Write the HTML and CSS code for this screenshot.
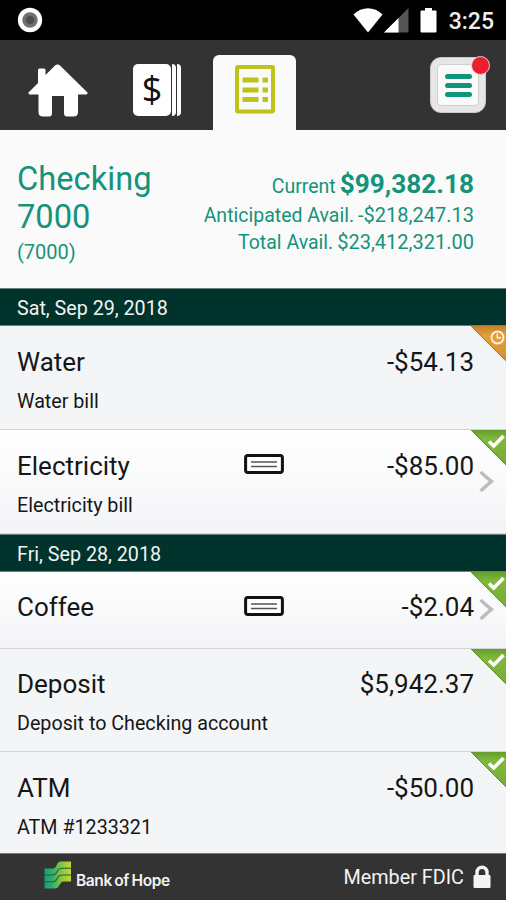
FILE: index.html
```html
<!DOCTYPE html>
<html lang="en">

<head>
    <meta charset="UTF-8">
    <title>Checking 7000</title>
    <link rel="stylesheet" href="styles.css">
</head>

<body>
    <!-- Shared icons -->
    <svg class="icon-defs" width="0" height="0">
        <defs>
            <linearGradient id="greenFill" x1="0" y1="0" x2="0" y2="1">
                <stop offset="0" stop-color="#659c2f" />
                <stop offset="0.25" stop-color="#7fb93a" />
                <stop offset="1" stop-color="#76ad35" />
            </linearGradient>
            <linearGradient id="orangeFill" x1="0" y1="0" x2="0" y2="1">
                <stop offset="0" stop-color="#c8812c" />
                <stop offset="0.3" stop-color="#e2a03c" />
                <stop offset="1" stop-color="#d68f30" />
            </linearGradient>
            <linearGradient id="hopeFill" gradientUnits="userSpaceOnUse" x1="0" y1="0" x2="27" y2="0">
                <stop offset="0" stop-color="#129e89" />
                <stop offset="0.3" stop-color="#2fae66" />
                <stop offset="0.6" stop-color="#7dc242" />
                <stop offset="1" stop-color="#c3d82e" />
            </linearGradient>
        </defs>
        <symbol id="cleared" viewBox="0 0 35 35">
            <path d="M0 0H35V35Z" fill="url(#greenFill)" />
            <path d="M0 0L35 35" stroke="#5d8f2c" stroke-width="1" />
            <path d="M18 11.5L22.7 16L32.5 6" fill="none" stroke="#fff" stroke-width="3.6" />
        </symbol>
        <symbol id="pending" viewBox="0 0 35 35">
            <path d="M0 0H35V35Z" fill="url(#orangeFill)" />
            <path d="M0 0L35 35" stroke="#b87828" stroke-width="1" />
            <circle cx="26.5" cy="11.5" r="6" fill="none" stroke="#fff3dd" stroke-width="1.8" />
            <path d="M26.3 7.5V11.8H30" fill="none" stroke="#fff3dd" stroke-width="1.5" />
        </symbol>
        <symbol id="check" viewBox="0 0 40 20">
            <rect x="1.6" y="1.6" width="36.8" height="16.8" rx="2.2" fill="#fff" stroke="#111" stroke-width="3" />
            <path d="M7 8H33M7 12.5H33" stroke="#555" stroke-width="1.7" />
        </symbol>
        <symbol id="arrow" viewBox="0 0 15 23">
            <path d="M1.5 2L12.3 11.5L1.5 21" fill="none" stroke="#bdbdbd" stroke-width="3.6" />
        </symbol>
    </svg>

    <div class="status-bar">
        <svg class="record" width="26" height="26" viewBox="0 0 26 26">
            <circle cx="13" cy="13" r="12.2" fill="#fff" />
            <circle cx="13" cy="13" r="7.7" fill="#707070" />
            <circle cx="13" cy="13" r="4" fill="#4e4e4e" />
        </svg>
        <div class="status-icons">
            <svg width="30" height="25" viewBox="0 0 30 25">
                <path d="M0.5 6.5C9 -1.7 21 -1.7 29.5 6.5L15 24.5Z" fill="#fff" />
            </svg>
            <svg class="signal" width="25" height="25" viewBox="0 0 25 25">
                <path d="M0 24.5L24.5 0V24.5Z" fill="#555" />
                <path d="M0 24.5L14.5 10V24.5Z" fill="#fff" />
            </svg>
            <svg class="battery" width="17" height="25" viewBox="0 0 17 25">
                <path d="M5 0H12V2.5H15.5Q16.5 2.5 16.5 3.5V23.5Q16.5 24.5 15.5 24.5H1.5Q0.5 24.5 0.5 23.5V3.5Q0.5 2.5 1.5 2.5H5Z" fill="#fff" />
            </svg>
            <span class="clock">3:25</span>
        </div>
    </div>

    <div class="tabs">
        <div class="tab">
            <svg width="60" height="54" viewBox="0 0 60 54">
                <path d="M29.5 0.5Q31 0.5 32 1.5L59.5 28.5Q60 30.5 58 30.5H50V48Q50 52.5 45.5 52.5H39Q36 52.5 36 49V32H24V49Q24 52.5 21 52.5H15Q10.5 52.5 10.5 48V30.5H2Q0 30.5 0.5 28.5L10 19V6Q10 4.5 11.5 4.5H16Q17.5 4.5 17.5 6V11L27 1.5Q28 0.5 29.5 0.5Z" fill="#fff" />
            </svg>
        </div>
        <div class="tab tab-accounts">
            <div class="bill">$</div>
            <div class="bill-edge"></div>
            <div class="bill-edge"></div>
        </div>
        <div class="tab active">
            <svg width="40" height="49" viewBox="0 0 40 49">
                <rect x="2" y="2" width="36" height="44.5" rx="1" fill="#fafafa" stroke="#bcc31a" stroke-width="4" />
                <path d="M7.5 15H23.5M7.5 25H23.5M7.5 34.5H23.5M27.5 15H33M27.5 25H33M27.5 34.5H33" stroke="#bcc31a" stroke-width="5" />
            </svg>
        </div>
        <div class="menu-button">
            <div class="menu-face">
                <span></span>
                <span></span>
                <span></span>
            </div>
            <div class="badge"></div>
        </div>
    </div>

    <div class="summary">
        <div class="account">
            <div class="account-name">Checking<br>7000</div>
            <div class="account-number">(7000)</div>
        </div>
        <div class="balances">
            <div class="balance current"><span>Current</span> <b>$99,382.18</b></div>
            <div class="balance"><span>Anticipated Avail.</span> -$218,247.13</div>
            <div class="balance"><span>Total Avail.</span> $23,412,321.00</div>
        </div>
    </div>

    <div class="date">Sat, Sep 29, 2018</div>
    <div class="row">
        <div class="line">
            <span class="name">Water</span>
            <span class="amount">-$54.13</span>
        </div>
        <div class="note">Water bill</div>
        <svg class="corner"><use href="#pending" /></svg>
    </div>
    <div class="row linked">
        <div class="line">
            <span class="name">Electricity</span>
            <svg class="check"><use href="#check" /></svg>
            <span class="amount">-$85.00</span>
        </div>
        <div class="note">Electricity bill</div>
        <svg class="corner"><use href="#cleared" /></svg>
        <svg class="arrow"><use href="#arrow" /></svg>
    </div>

    <div class="date">Fri, Sep 28, 2018</div>
    <div class="row linked short">
        <div class="line">
            <span class="name">Coffee</span>
            <svg class="check"><use href="#check" /></svg>
            <span class="amount">-$2.04</span>
        </div>
        <svg class="corner"><use href="#cleared" /></svg>
        <svg class="arrow"><use href="#arrow" /></svg>
    </div>
    <div class="row deposit">
        <div class="line">
            <span class="name">Deposit</span>
            <span class="amount">$5,942.37</span>
        </div>
        <div class="note">Deposit to Checking account</div>
        <svg class="corner"><use href="#cleared" /></svg>
    </div>
    <div class="row last">
        <div class="line">
            <span class="name">ATM</span>
            <span class="amount">-$50.00</span>
        </div>
        <div class="note">ATM #1233321</div>
        <svg class="corner"><use href="#cleared" /></svg>
    </div>

    <div class="footer">
        <div class="logo">
            <svg width="28" height="29" viewBox="0 0 28 29">
                <g fill="url(#hopeFill)">
                    <path d="M0.5 7.5H9C13 7.5 12 0.5 17 0.5H27V20.5H20C15 20.5 16 27.5 11 27.5H0.5Z" />
                </g>
                <path d="M0.5 14H9C14 14 12 7.2 18 7.2H27M0.5 20.8H9C14 20.8 12 14 18 14H27" fill="none" stroke="#2a5a38" stroke-width="1.1" />
            </svg>
            <span>Bank of Hope</span>
        </div>
        <div class="fdic">
            <span>Member FDIC</span>
            <svg width="18" height="24" viewBox="0 0 18 24">
                <path d="M4 11V7.5C4 0.5 14 0.5 14 7.5V11" fill="none" stroke="#f4f4f4" stroke-width="3.4" />
                <rect x="0.5" y="10" width="17" height="13" rx="1" fill="#f4f4f4" />
            </svg>
        </div>
    </div>
</body>

</html>
```

FILE: styles.css
```css
/* General Styles */
* {
    box-sizing: border-box;
}

body {
    margin: 0;
    width: 506px;
    height: 900px;
    overflow: hidden;
    font-family: Roboto, "Liberation Sans", sans-serif;
    background-color: #f4f5f7;
    color: #161616;
}

svg {
    display: block;
    flex-shrink: 0;
}

.icon-defs {
    position: absolute;
}

/* Status Bar */
.status-bar {
    display: flex;
    justify-content: space-between;
    align-items: center;
    height: 40px;
    padding: 0 12px 0 17px;
    background-color: #000;
}

.status-icons {
    display: flex;
    align-items: center;
}

.signal {
    margin-left: 1px;
}

.battery {
    margin-left: 11px;
}

.clock {
    margin-left: 12px;
    font-size: 23px;
    line-height: 40px;
    padding-top: 2px;
    height: 40px;
    font-weight: 500;
    color: #eee;
}

/* Tabs */
.tabs {
    display: flex;
    align-items: flex-end;
    height: 90px;
    padding: 0 18px 0 28px;
    background-color: #333;
}

.tab {
    height: 75px;
    padding-top: 9px;
}

.tab-accounts {
    display: flex;
    gap: 1px;
    width: 49px;
    margin-left: 45px;
}

.bill {
    width: 38px;
    height: 52px;
    border-radius: 5px;
    background-color: #fff;
    color: #111;
    font-family: "Open Sans", sans-serif;
    font-size: 36px;
    line-height: 50px;
    text-align: center;
}

.bill-edge {
    width: 4px;
    height: 52px;
    border-radius: 0 4px 4px 0;
    background-color: #fff;
}

.tab.active {
    width: 83px;
    margin-left: 31px;
    padding: 10px 0 0 22px;
    border-radius: 6px 6px 0 0;
    background-color: #fafafa;
}

.menu-button {
    position: relative;
    width: 56px;
    height: 56px;
    margin: 0 2px 17px auto;
    padding: 6px;
    border-radius: 11px;
    background-color: #e6e6e6;
    border: 1px solid #c9c9c9;
}

.menu-face {
    display: flex;
    flex-direction: column;
    align-items: center;
    justify-content: center;
    gap: 4px;
    height: 42px;
    border: 1px solid #cfcfcf;
    border-radius: 4px;
    background-color: #fafafa;
}

.menu-face span {
    width: 27px;
    height: 5px;
    border-radius: 3px;
    background-color: #0f9579;
}

.badge {
    position: absolute;
    top: -2px;
    right: -5px;
    width: 19px;
    height: 19px;
    border: 1px solid #f3c9cc;
    border-radius: 50%;
    background-color: #e8202f;
}

/* Account Summary */
.summary {
    display: flex;
    justify-content: space-between;
    height: 158px;
    padding: 30px 32px 0 17px;
    background-color: #fafafa;
    color: #15937a;
}

.account-name {
    font-size: 32.7px;
    line-height: 38px;
}

.account-number {
    font-size: 20px;
    line-height: 32px;
}

.balances {
    padding-top: 9px;
}

.balance {
    display: flex;
    justify-content: flex-end;
    align-items: baseline;
    gap: 4px;
    font-size: 20px;
    line-height: 27px;
}

.balance span {
    font-size: 19.5px;
}

.current {
    line-height: 31px;
}

.current b {
    font-size: 26.2px;
}

/* Transactions */
.date {
    height: 38px;
    padding-left: 17px;
    border-top: 1px solid #6b7f7b;
    border-bottom: 1px solid #6b7f7b;
    background-color: #00332c;
    color: #f2f2f2;
    font-size: 19.7px;
    line-height: 39px;
}

.row {
    position: relative;
    height: 104px;
    padding: 21px 32px 0 17px;
    border-bottom: 1px solid #d3d4d6;
    background-color: #f4f5f7;
}

.row.linked {
    background-image: linear-gradient(#fff, #f3f4f6);
}

.row.short {
    height: 77px;
    padding-top: 20px;
}

.row.deposit {
    height: 103px;
    padding-top: 20px;
}

.row.last {
    height: 101px;
    border-bottom: 0;
}

.line {
    display: grid;
    grid-template-columns: 227px 40px 1fr;
    height: 31px;
    font-size: 26px;
    line-height: 31px;
}

.amount {
    grid-column: 3;
    text-align: right;
}

.check {
    width: 40px;
    height: 20px;
    margin-top: 3px;
}

.short .check {
    margin-top: 4px;
}

.note {
    margin-top: 12px;
    font-size: 19.7px;
    line-height: 24px;
}

.corner {
    position: absolute;
    top: 0;
    right: 0;
    width: 35px;
    height: 35px;
}

.arrow {
    position: absolute;
    top: 40px;
    right: 12px;
    width: 15px;
    height: 23px;
}

.short .arrow {
    top: 26px;
}

/* Footer */
.footer {
    display: flex;
    justify-content: space-between;
    height: 48px;
    padding: 0 15px 0 44px;
    border-top: 1px solid #777;
    background-color: #333;
    color: #f4f4f4;
}

.logo {
    display: flex;
    padding-top: 7px;
    gap: 4px;
}

.logo span {
    padding-top: 10px;
    font-family: Inter, "Liberation Sans", sans-serif;
    font-size: 15.5px;
    font-weight: 600;
    line-height: 20px;
    letter-spacing: -0.4px;
    word-spacing: -1px;
}

.fdic {
    display: flex;
    align-items: center;
    gap: 9px;
    height: 46px;
    font-size: 19.8px;
}
```
